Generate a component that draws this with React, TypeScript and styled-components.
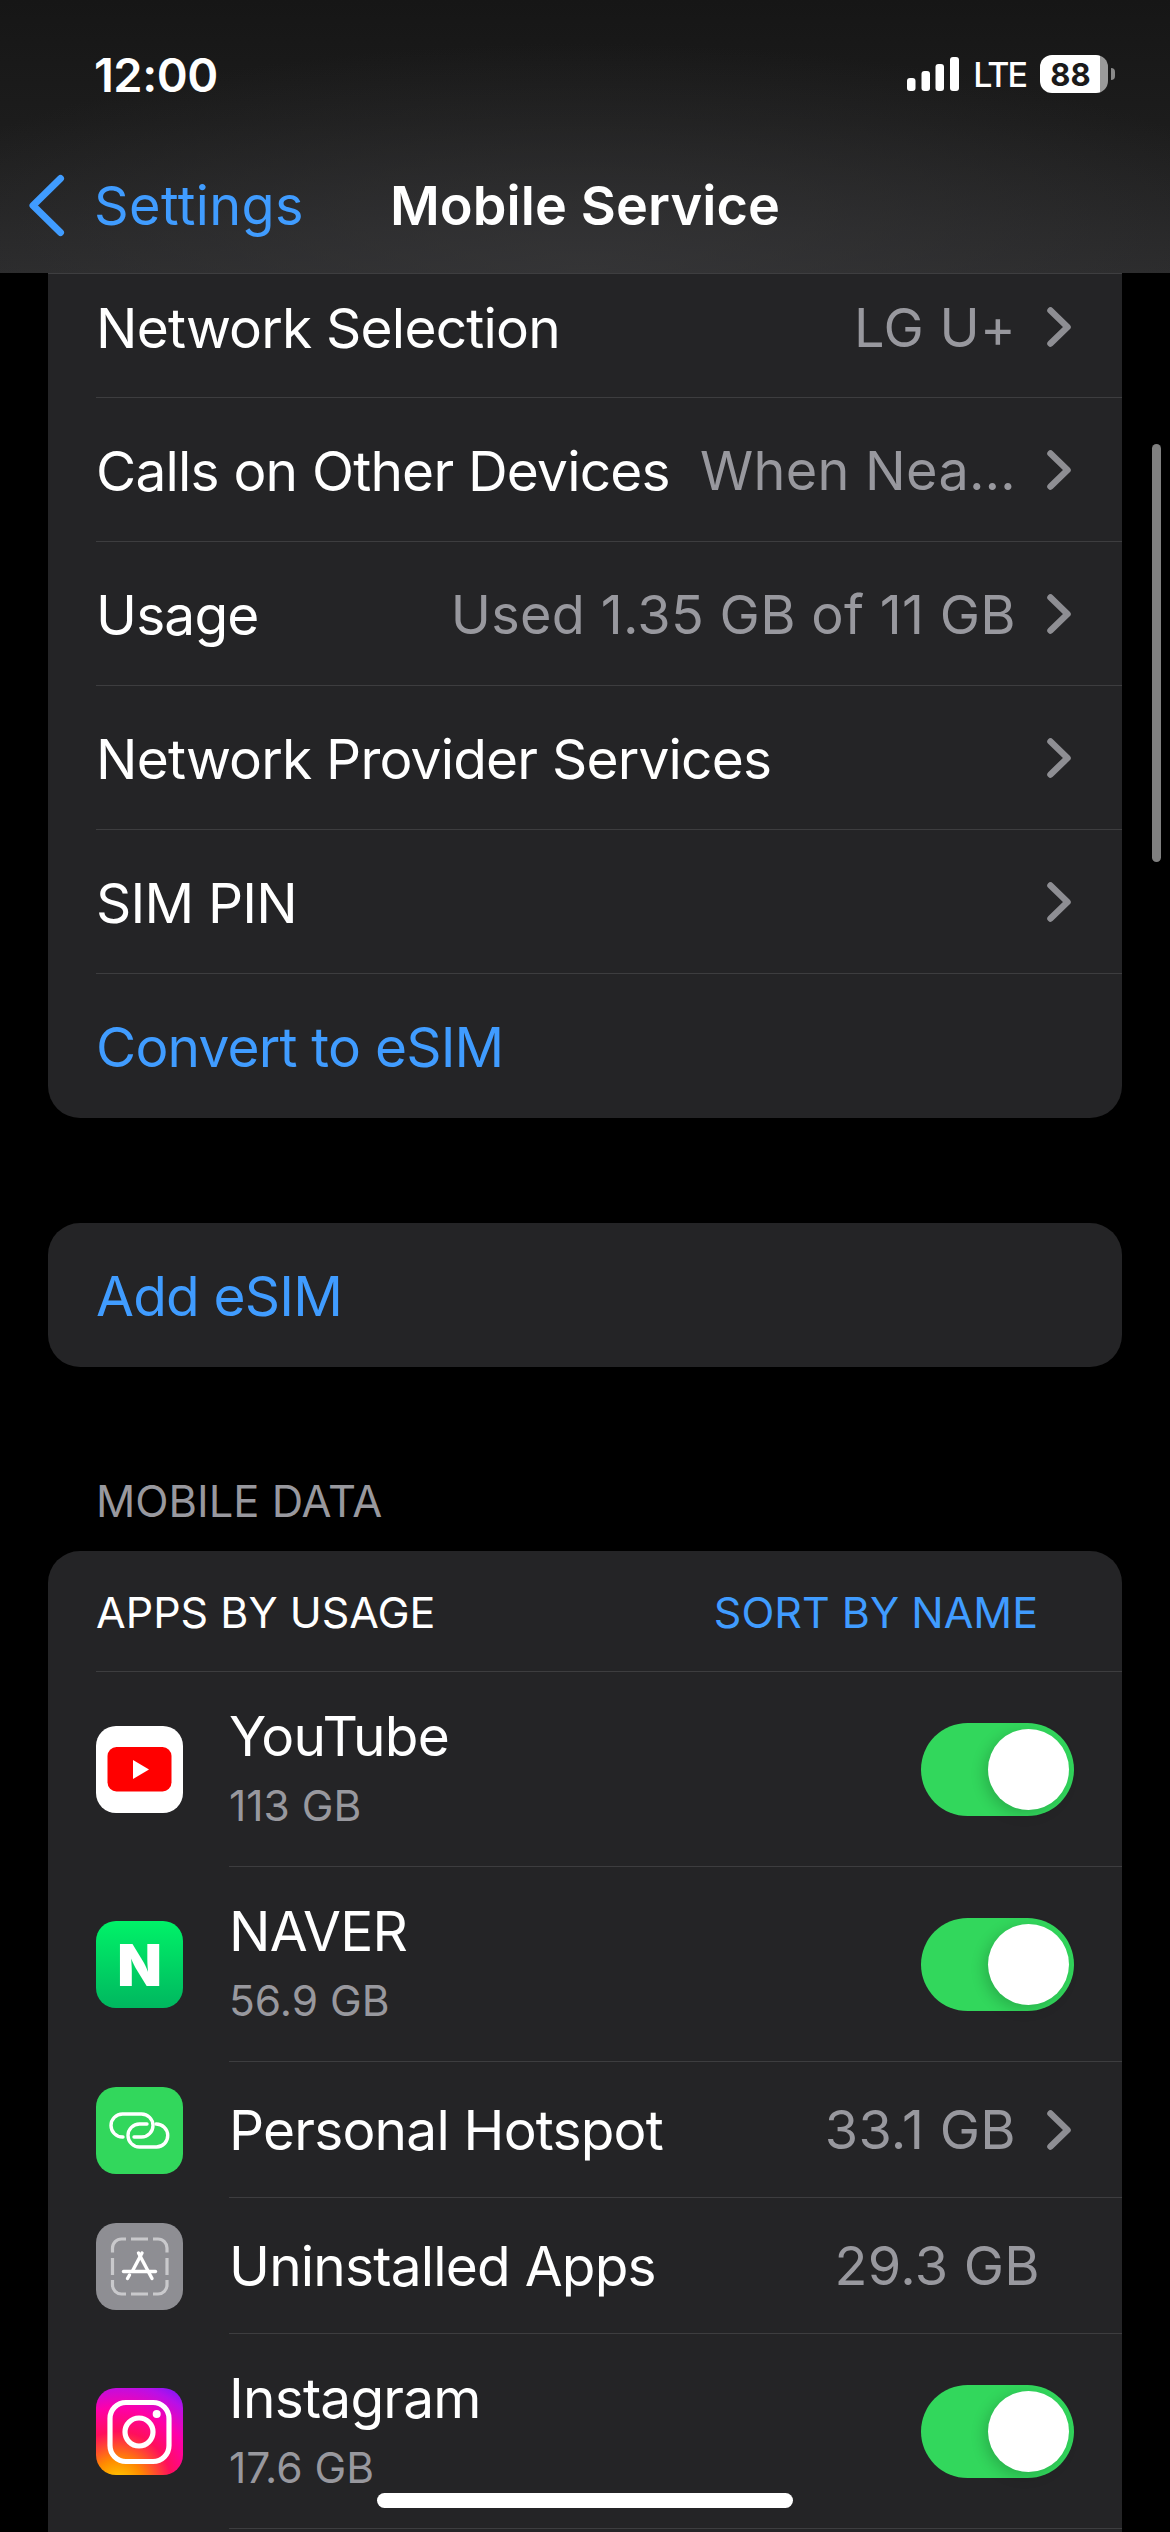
import React from "react";
import styled, { createGlobalStyle } from "styled-components";

const Global = createGlobalStyle`
  html, body { margin: 0; padding: 0; background: #000; }
  body { font-family: Inter, "Noto Sans", "Liberation Sans", sans-serif; -webkit-font-smoothing: antialiased; }
`;

const BLUE = "#409cff";
const GREY = "#98989e";

const Phone = styled.div`
  position: relative;
  width: 1170px;
  height: 2532px;
  overflow: hidden;
  background: #000;
  color: #fff;
`;

const Header = styled.header`
  height: 273px;
  background:
    radial-gradient(ellipse 760px 230px at 585px 273px, rgba(56, 56, 58, 0.75), rgba(56, 56, 58, 0) 100%),
    linear-gradient(#161616 0, #1c1c1c 45%, #2a2a2b 100%);
  display: flex;
  flex-direction: column;
`;

const StatusBar = styled.div`
  height: 148px;
  display: flex;
  align-items: center;
  justify-content: space-between;
  padding: 0 62px 0 94px;
`;

const Time = styled.span`
  font-size: 47px;
  font-weight: 600;
  letter-spacing: -0.5px;
`;

const StatusRight = styled.div`
  display: flex;
  align-items: center;
`;

const Lte = styled.span`
  font-size: 34px;
  font-weight: 500;
  margin: 0 14px;
  letter-spacing: -2px;
`;

const Battery = styled.div`
  width: 68px;
  height: 38px;
  border-radius: 12px;
  background: linear-gradient(90deg, #fff 88%, #9a9a9a 88%);
  color: #1a1a1a;
  font-size: 31px;
  font-weight: 700;
  display: flex;
  align-items: center;
  justify-content: center;
  padding-right: 7px;
  box-sizing: border-box;
  position: relative;

  &::after {
    content: "";
    position: absolute;
    right: -7px;
    top: 13px;
    width: 4px;
    height: 12px;
    background: #8a8a8a;
    border-radius: 0 6px 6px 0;
  }
`;

const NavBar = styled.nav`
  height: 125px;
  padding: 0 28px 10px;
  box-sizing: border-box;
  display: grid;
  grid-template-columns: 1fr auto 1fr;
  align-items: center;
`;

const Back = styled.div`
  display: flex;
  align-items: center;
  gap: 29px;
  color: ${BLUE};
  font-size: 54px;
  letter-spacing: 0.4px;
`;

const Title = styled.div`
  font-size: 54px;
  font-weight: 600;
  letter-spacing: 0.1px;
`;

const Content = styled.main`
  padding: 0 48px;
`;

const Card = styled.section<{ $clipped?: boolean }>`
  background: #242426;
  border-radius: ${(p) => (p.$clipped ? "0 0 32px 32px" : "32px")};
  border-top: ${(p) => (p.$clipped ? "1px solid #3e3e40" : "none")};
  overflow: hidden;
`;

const SpacedCard = styled(Card)`
  margin-top: 105px;
`;

const Row = styled.div<{ $height: number }>`
  height: ${(p) => p.$height}px;
  padding-left: 48px;
  display: flex;
  box-sizing: border-box;
`;

const RowBody = styled.div<{ $end?: number; $last?: boolean; $lift?: number }>`
  flex: 1;
  min-width: 0;
  display: flex;
  align-items: center;
  justify-content: space-between;
  box-sizing: border-box;
  padding-right: ${(p) => p.$end ?? 51}px;
  padding-bottom: ${(p) => p.$lift ?? 0}px;
  border-bottom: ${(p) => (p.$last ? "none" : "1.5px solid #3d3d3f")};
`;

const Label = styled.span`
  font-size: 55px;
  letter-spacing: -0.8px;
  padding-top: 2px;
  white-space: nowrap;
`;

const BlueLabel = styled(Label)`
  color: ${BLUE};
`;

const AppLabel = styled(Label)`
  padding-top: 0;
`;

const Right = styled.div`
  display: flex;
  align-items: center;
  gap: 31px;
`;

const Value = styled.span`
  font-size: 54px;
  letter-spacing: 0.3px;
  padding-top: 2px;
  color: ${GREY};
  white-space: nowrap;
`;

const AppValue = styled(Value)`
  padding-top: 0;
`;

const SectionLabel = styled.div`
  padding: 114px 0 0 48px;
  height: 184px;
  box-sizing: border-box;
  font-size: 43.5px;
  line-height: 40px;
  color: ${GREY};
`;

const Caps = styled.span`
  font-size: 43px;
  padding-top: 2px;
`;

const BlueCaps = styled(Caps)`
  color: ${BLUE};
`;

const IconTile = styled.div<{ $bg: string }>`
  width: 87px;
  height: 87px;
  flex: none;
  border-radius: 20px;
  background: ${(p) => p.$bg};
  display: flex;
  align-items: center;
  justify-content: center;
  color: #fff;
  overflow: hidden;
`;

const NaverN = styled.span`
  font-size: 58px;
  font-weight: 900;
  line-height: 1;
`;

const AppRow = styled.div<{ $height: number }>`
  height: ${(p) => p.$height}px;
  padding-left: 48px;
  display: flex;
  align-items: stretch;
  box-sizing: border-box;
`;

const IconSlot = styled.div`
  width: 85px;
  margin-right: 48px;
  flex: none;
  display: flex;
  align-items: center;
`;

const TextStack = styled.div`
  display: flex;
  flex-direction: column;
  gap: 14px;
  padding-bottom: 3px;
`;

const AppName = styled.span`
  font-size: 55px;
  line-height: 62px;
  letter-spacing: -0.8px;
`;

const AppSize = styled.span`
  font-size: 42.5px;
  line-height: 50px;
  color: ${GREY};
`;

const Toggle = styled.div`
  width: 153px;
  height: 93px;
  border-radius: 47px;
  background: #32d75c;
  position: relative;
  flex: none;

  &::after {
    content: "";
    position: absolute;
    top: 6px;
    right: 5px;
    width: 81px;
    height: 81px;
    border-radius: 50%;
    background: #fff;
    box-shadow: -4px 4px 14px rgba(0, 0, 0, 0.18);
  }
`;

const Scrollbar = styled.div`
  position: absolute;
  left: 1152px;
  top: 444px;
  width: 9px;
  height: 418px;
  border-radius: 5px;
  background: #808080;
`;

const HomeBar = styled.div`
  position: absolute;
  left: 377px;
  top: 2493px;
  width: 416px;
  height: 15px;
  border-radius: 8px;
  background: #fff;
`;

const Chevron = () => (
  <svg width="24" height="40" viewBox="0 0 24 40" fill="none">
    <path d="M3.5 3.5 L20.5 20 L3.5 36.5" stroke="#8e8e93" strokeWidth="6.5" strokeLinecap="round" strokeLinejoin="round" />
  </svg>
);

const Signal = () => (
  <svg width="52" height="34" viewBox="0 0 52 34" fill="#fff">
    <rect x="0" y="21" width="8.5" height="13" rx="3" />
    <rect x="14.5" y="14" width="8.5" height="20" rx="3" />
    <rect x="28.5" y="7" width="8.5" height="27" rx="3" />
    <rect x="43" y="0" width="9" height="34" rx="3" />
  </svg>
);

const BackChevron = () => (
  <svg width="37" height="63" viewBox="0 0 37 63" fill="none">
    <path d="M32.5 4.5 L5 31.5 L32.5 58.5" stroke={BLUE} strokeWidth="7" strokeLinecap="round" strokeLinejoin="round" />
  </svg>
);

const YouTubeIcon = () => (
  <IconTile $bg="#fff">
    <svg width="87" height="87" viewBox="0 0 87 87">
      <rect x="11.5" y="21" width="64" height="44.5" rx="9" fill="#ff0000" />
      <path d="M37 34 L53 43.5 L37 53 Z" fill="#fff" />
    </svg>
  </IconTile>
);

const NaverIcon = () => (
  <IconTile $bg="linear-gradient(#00f268, #00b75f)">
    <NaverN>N</NaverN>
  </IconTile>
);

const HotspotIcon = () => (
  <IconTile $bg="#32d75c">
    <svg width="87" height="87" viewBox="0 0 87 87" fill="none" stroke="#fff" strokeWidth="3.4" strokeLinecap="round">
      <path d="M27 50 H26.5 A11.5 11.5 0 0 1 26.5 27 H45.5 A11.5 11.5 0 0 1 45.5 50 H38" />
      <path d="M60 37 A11.5 11.5 0 0 1 60.5 60 H43.5 A11.5 11.5 0 0 1 43.5 37 H51" />
    </svg>
  </IconTile>
);

const UninstalledIcon = () => (
  <IconTile $bg="#8e8e93">
    <svg width="87" height="87" viewBox="0 0 87 87" fill="none" strokeLinecap="butt">
      <g stroke="#c9c9cc" strokeWidth="3.2">
        <path d="M16.5 29.5 V25 A9 9 0 0 1 25.5 16 H30" />
        <path d="M57 16 H62 A9 9 0 0 1 71 25 V29.5" />
        <path d="M71 57 V62 A9 9 0 0 1 62 71 H57" />
        <path d="M30 71 H25.5 A9 9 0 0 1 16.5 62 V57" />
        <path d="M35 16 H52" />
        <path d="M35 71 H52" />
        <path d="M16.5 35 V52" />
        <path d="M71 35 V52" />
      </g>
      <g stroke="#fff" strokeWidth="3.4" strokeLinecap="round">
        <path d="M27.5 48.5 H59.5" />
        <path d="M42.5 30 L56 55.5" />
        <path d="M46 30 L37 47" />
        <path d="M33.5 52 L31.5 55.5" />
      </g>
    </svg>
  </IconTile>
);

const InstagramIcon = () => (
  <IconTile $bg="radial-gradient(circle at 25% 112%, #ffdb00 0, #ff8a00 22%, #ff0f5c 46%, #ff00a8 66%, #b810e8 86%, #6a1bff 100%)">
    <svg width="87" height="87" viewBox="0 0 87 87" fill="none" stroke="#fff">
      <rect x="14" y="14.5" width="59" height="59" rx="16" strokeWidth="5.2" />
      <circle cx="43" cy="44" r="14" strokeWidth="5.2" />
      <circle cx="60.7" cy="26" r="4" fill="#fff" stroke="none" />
    </svg>
  </IconTile>
);

export default function App() {
  return (
    <Phone>
      <Global />
      <Header>
        <StatusBar>
          <Time>12:00</Time>
          <StatusRight>
            <Signal />
            <Lte>LTE</Lte>
            <Battery>88</Battery>
          </StatusRight>
        </StatusBar>
        <NavBar>
          <Back>
            <BackChevron />
            <span>Settings</span>
          </Back>
          <Title>Mobile Service</Title>
        </NavBar>
      </Header>
      <Content>
        <Card $clipped>
          <Row $height={124}>
            <RowBody $lift={18}>
              <Label>Network Selection</Label>
              <Right>
                <Value>LG U+</Value>
                <Chevron />
              </Right>
            </RowBody>
          </Row>
          <Row $height={144}>
            <RowBody>
              <Label>Calls on Other Devices</Label>
              <Right>
                <Value>When Nea…</Value>
                <Chevron />
              </Right>
            </RowBody>
          </Row>
          <Row $height={144}>
            <RowBody>
              <Label>Usage</Label>
              <Right>
                <Value>Used 1.35 GB of 11 GB</Value>
                <Chevron />
              </Right>
            </RowBody>
          </Row>
          <Row $height={144}>
            <RowBody>
              <Label>Network Provider Services</Label>
              <Chevron />
            </RowBody>
          </Row>
          <Row $height={144}>
            <RowBody>
              <Label>SIM PIN</Label>
              <Chevron />
            </RowBody>
          </Row>
          <Row $height={144}>
            <RowBody $last>
              <BlueLabel>Convert to eSIM</BlueLabel>
            </RowBody>
          </Row>
        </Card>
        <SpacedCard>
          <Row $height={144}>
            <RowBody $last>
              <BlueLabel>Add eSIM</BlueLabel>
            </RowBody>
          </Row>
        </SpacedCard>
        <SectionLabel>MOBILE DATA</SectionLabel>
        <Card>
          <Row $height={121}>
            <RowBody $end={84}>
              <Caps>APPS BY USAGE</Caps>
              <BlueCaps>SORT BY NAME</BlueCaps>
            </RowBody>
          </Row>
          <AppRow $height={195}>
            <IconSlot><YouTubeIcon /></IconSlot>
            <RowBody $end={48}>
              <TextStack>
                <AppName>YouTube</AppName>
                <AppSize>113 GB</AppSize>
              </TextStack>
              <Toggle />
            </RowBody>
          </AppRow>
          <AppRow $height={195}>
            <IconSlot><NaverIcon /></IconSlot>
            <RowBody $end={48}>
              <TextStack>
                <AppName>NAVER</AppName>
                <AppSize>56.9 GB</AppSize>
              </TextStack>
              <Toggle />
            </RowBody>
          </AppRow>
          <AppRow $height={136}>
            <IconSlot><HotspotIcon /></IconSlot>
            <RowBody>
              <AppLabel>Personal Hotspot</AppLabel>
              <Right>
                <AppValue>33.1 GB</AppValue>
                <Chevron />
              </Right>
            </RowBody>
          </AppRow>
          <AppRow $height={136}>
            <IconSlot><UninstalledIcon /></IconSlot>
            <RowBody $end={82}>
              <AppLabel>Uninstalled Apps</AppLabel>
              <AppValue>29.3 GB</AppValue>
            </RowBody>
          </AppRow>
          <AppRow $height={195}>
            <IconSlot><InstagramIcon /></IconSlot>
            <RowBody $end={48}>
              <TextStack>
                <AppName>Instagram</AppName>
                <AppSize>17.6 GB</AppSize>
              </TextStack>
              <Toggle />
            </RowBody>
          </AppRow>
          <AppRow $height={60} />
        </Card>
      </Content>
      <Scrollbar />
      <HomeBar />
    </Phone>
  );
}
